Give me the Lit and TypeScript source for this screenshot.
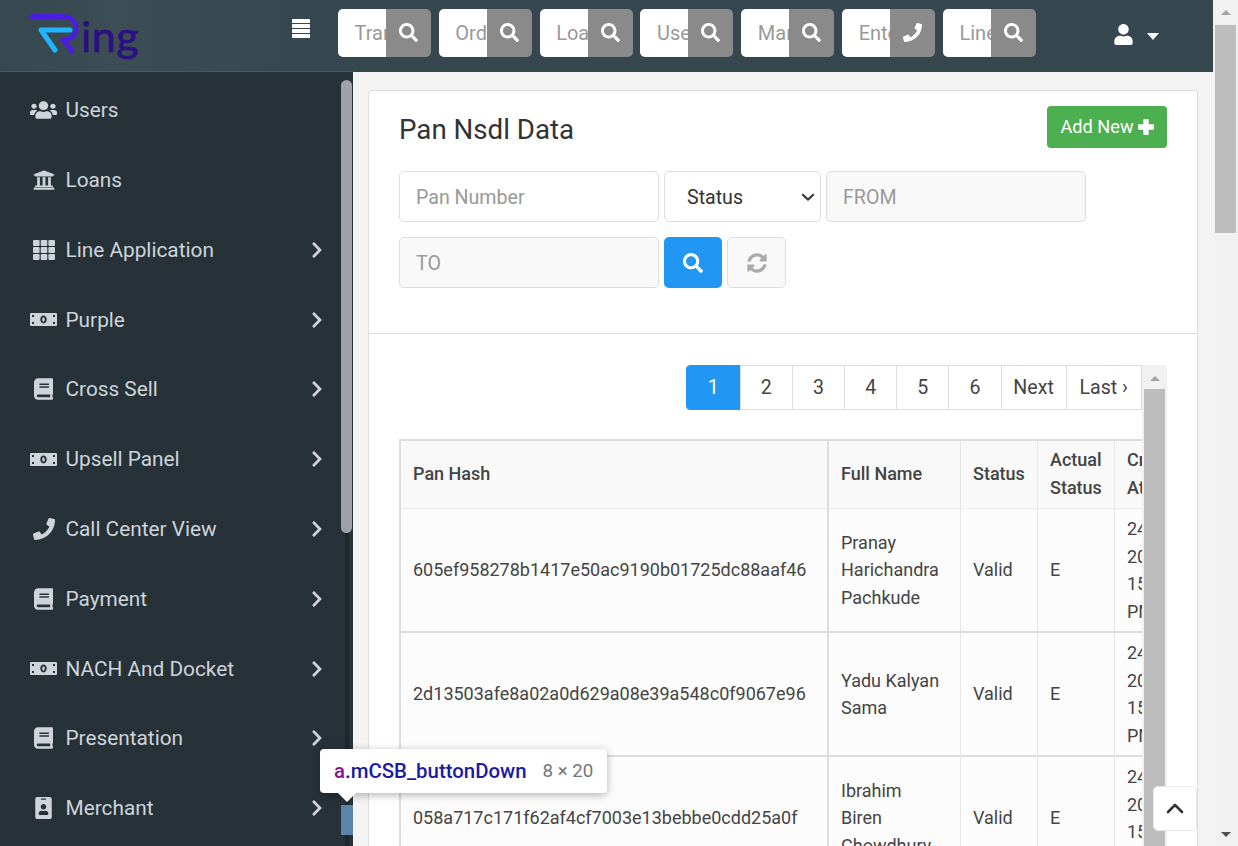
import { LitElement, html, css, svg } from "lit";
import { customElement } from "lit/decorators.js";

const P = {
  search: "M505 442.7L405.3 343c-4.5-4.5-10.6-7-17-7H372c27.6-35.3 44-79.7 44-128C416 93.1 322.9 0 208 0S0 93.1 0 208s93.1 208 208 208c48.3 0 92.7-16.4 128-44v16.3c0 6.4 2.5 12.5 7 17l99.7 99.7c9.4 9.4 24.6 9.4 33.9 0l28.3-28.3c9.4-9.4 9.4-24.6.1-34zM208 336c-70.7 0-128-57.2-128-128 0-70.7 57.2-128 128-128 70.7 0 128 57.2 128 128 0 70.7-57.2 128-128 128z",
  phone: "M493.4 24.6l-104-24c-11.3-2.6-22.9 3.3-27.5 13.9l-48 112c-4.2 9.8-1.4 21.3 6.9 28l60.6 49.6c-36 76.7-98.9 140.5-177.2 177.2l-49.6-60.6c-6.8-8.3-18.2-11.1-28-6.9l-112 48C3.9 366.5-2 378.1.6 389.4l24 104C27.1 504.2 36.7 512 48 512c256.1 0 464-207.5 464-464 0-11.2-7.7-20.9-18.6-23.4z",
  user: "M224 256c70.7 0 128-57.3 128-128S294.7 0 224 0 96 57.3 96 128s57.3 128 128 128zm89.6 32h-16.7c-22.2 10.2-46.9 16-72.9 16s-50.6-5.8-72.9-16h-16.7C60.2 288 0 348.2 0 422.4V464c0 26.5 21.5 48 48 48h352c26.5 0 48-21.5 48-48v-41.6c0-74.2-60.2-134.4-134.4-134.4z",
  users: "M96 224c35.3 0 64-28.7 64-64s-28.7-64-64-64-64 28.7-64 64 28.7 64 64 64zm448 0c35.3 0 64-28.7 64-64s-28.7-64-64-64-64 28.7-64 64 28.7 64 64 64zm32 32h-64c-17.6 0-33.5 7.1-45.1 18.6 40.3 22.1 68.9 62 75.1 109.4h66c17.7 0 32-14.3 32-32v-32c0-35.3-28.7-64-64-64zm-256 0c61.9 0 112-50.1 112-112S381.9 32 320 32 208 82.1 208 144s50.1 112 112 112zm76.8 32h-8.3c-20.8 10-43.9 16-68.5 16s-47.6-6-68.5-16h-8.3C179.6 288 128 339.6 128 403.2V432c0 26.5 21.5 48 48 48h288c26.5 0 48-21.5 48-48v-28.8c0-63.6-51.6-115.2-115.2-115.2zm-223.7-13.4C161.5 263.1 145.6 256 128 256H64c-35.3 0-64 28.7-64 64v32c0 17.7 14.3 32 32 32h65.9c6.3-47.4 34.9-87.3 75.2-109.4z",
  bank: "M496 128v16a8 8 0 0 1-8 8h-24v12c0 6.627-5.373 12-12 12H60c-6.627 0-12-5.373-12-12v-12H24a8 8 0 0 1-8-8v-16a8 8 0 0 1 4.941-7.392l232-88a7.996 7.996 0 0 1 6.118 0l232 88A8 8 0 0 1 496 128zm-24 304H40c-13.255 0-24 10.745-24 24v16a8 8 0 0 0 8 8h464a8 8 0 0 0 8-8v-16c0-13.255-10.745-24-24-24zM96 192v192H60c-6.627 0-12 5.373-12 12v20h416v-20c0-6.627-5.373-12-12-12h-36V192h-64v192h-64V192h-64v192h-64V192H96z",
  book: "M448 360V24c0-13.3-10.7-24-24-24H96C43 0 0 43 0 96v320c0 53 43 96 96 96h328c13.3 0 24-10.7 24-24v-16c0-7.5-3.5-14.3-8.9-18.7-4.2-15.4-4.2-59.3 0-74.7 5.4-4.3 8.9-11.1 8.9-18.6zM128 134c0-3.3 2.7-6 6-6h212c3.3 0 6 2.7 6 6v20c0 3.3-2.7 6-6 6H134c-3.3 0-6-2.7-6-6v-20zm0 64c0-3.3 2.7-6 6-6h212c3.3 0 6 2.7 6 6v20c0 3.3-2.7 6-6 6H134c-3.3 0-6-2.7-6-6v-20zm253.4 250H96c-17.7 0-32-14.3-32-32 0-17.6 14.4-32 32-32h285.4c-1.9 17.1-1.9 46.9 0 64z",
  badge: "M336 0H48C21.5 0 0 21.5 0 48v416c0 26.5 21.5 48 48 48h288c26.5 0 48-21.5 48-48V48c0-26.5-21.5-48-48-48zM144 32h96c8.8 0 16 7.2 16 16s-7.2 16-16 16h-96c-8.8 0-16-7.2-16-16s7.2-16 16-16zm48 128c35.3 0 64 28.7 64 64s-28.7 64-64 64-64-28.7-64-64 28.7-64 64-64zm112 236.8c0 10.6-10 19.2-22.4 19.2H102.4C90 416 80 407.4 80 396.8v-19.2c0-31.8 30.1-57.6 67.2-57.6h5c12.3 5.1 25.7 8 39.8 8s27.6-2.9 39.8-8h5c37.1 0 67.2 25.8 67.2 57.6v19.2z",
  sync: "M370.72 133.28C339.458 104.008 298.888 87.962 255.848 88c-77.458.068-144.328 53.178-162.791 126.85-1.344 5.363-6.122 9.15-11.651 9.15H24.103c-7.498 0-13.194-6.807-11.807-14.176C33.933 94.924 134.813 8 256 8c66.448 0 126.791 26.136 171.315 68.685L463.03 40.97C478.149 25.851 504 36.559 504 57.941V192c0 13.255-10.745 24-24 24H345.941c-21.382 0-32.09-25.851-16.971-40.971l41.75-41.749zM32 296h134.059c21.382 0 32.09 25.851 16.971 40.971l-41.75 41.75c31.262 29.273 71.835 45.319 114.876 45.28 77.418-.07 144.315-53.144 162.787-126.849 1.344-5.363 6.122-9.15 11.651-9.15h57.304c7.498 0 13.194 6.807 11.807 14.176C478.067 417.076 377.187 504 256 504c-66.448 0-126.791-26.136-171.315-68.685L48.97 471.03C33.851 486.149 8 475.441 8 454.059V320c0-13.255 10.745-24 24-24z",
  chevron: "M285.476 272.971L91.132 467.314c-9.373 9.373-24.569 9.373-33.941 0l-22.667-22.667c-9.357-9.357-9.375-24.522-.04-33.901L188.505 256 34.484 101.255c-9.335-9.379-9.317-24.544.04-33.901l22.667-22.667c9.373-9.373 24.569-9.373 33.941 0L285.475 239.03c9.373 9.372 9.373 24.568.001 33.941z",
};

const icon = (d: string, w: number, h: number, vb = "0 0 512 512") =>
  html`<svg width=${w} height=${h} viewBox=${vb} fill="currentColor"><path d=${d}></path></svg>`;

// the reference draws this one flatter than the font's own proportions
const usersIcon = html`<svg width="27" height="20" viewBox="0 0 640 512" preserveAspectRatio="none" fill="currentColor"><path d=${P.users}></path></svg>`;

const grid = html`<svg width="22" height="20" viewBox="0 0 22 20" fill="currentColor">
  ${[0, 7.7, 15.4].map((x) => [0, 7, 14].map((y) => svg`<rect x=${x} y=${y} width="6.6" height="6" rx="1"></rect>`))}
</svg>`;

// money note, the corners and the middle are cut out of the plate
const bill = html`<svg width="27" height="13" viewBox="0 0 27 13">
  <rect width="27" height="13" rx="1" fill="currentColor"></rect>
  <g fill="#263238">
    <rect x="2" y="2" width="2" height="2"></rect>
    <rect x="23" y="2" width="2" height="2"></rect>
    <rect x="2" y="9" width="2" height="2"></rect>
    <rect x="23" y="9" width="2" height="2"></rect>
    <path fill-rule="evenodd" d="M13.5 2.6c2 0 3.2 1.7 3.2 3.9s-1.2 3.9-3.2 3.9-3.2-1.7-3.2-3.9 1.2-3.9 3.2-3.9zm0 1.7c-.8 0-1.2 1-1.2 2.2s.4 2.2 1.2 2.2 1.2-1 1.2-2.2-.4-2.2-1.2-2.2z"></path>
  </g>
</svg>`;

const menu = [
  { label: "Users", icon: usersIcon, sub: false },
  { label: "Loans", icon: icon(P.bank, 22, 22), sub: false },
  { label: "Line Application", icon: grid, sub: true },
  { label: "Purple", icon: bill, sub: true },
  { label: "Cross Sell", icon: icon(P.book, 19, 22, "0 0 448 512"), sub: true },
  { label: "Upsell Panel", icon: bill, sub: true },
  { label: "Call Center View", icon: icon(P.phone, 22, 22), sub: true },
  { label: "Payment", icon: icon(P.book, 19, 22, "0 0 448 512"), sub: true },
  { label: "NACH And Docket", icon: bill, sub: true },
  { label: "Presentation", icon: icon(P.book, 19, 22, "0 0 448 512"), sub: true },
  { label: "Merchant", icon: icon(P.badge, 17, 22, "0 0 384 512"), sub: true },
];

const lookups = [
  { hint: "Transaction Id", phone: false },
  { hint: "Order Id", phone: false },
  { hint: "Loan Id", phone: false },
  { hint: "User Id", phone: false },
  { hint: "Mandate Id", phone: false },
  { hint: "Enter Number", phone: true },
  { hint: "Line Id", phone: false },
];

const rows = [
  { hash: "605ef958278b1417e50ac9190b01725dc88aaf46", name: ["Pranay", "Harichandra", "Pachkude"] },
  { hash: "2d13503afe8a02a0d629a08e39a548c0f9067e96", name: ["Yadu Kalyan", "Sama"] },
  { hash: "058a717c171f62af4cf7003e13bebbe0cdd25a0f", name: ["Ibrahim", "Biren", "Chowdhury"] },
];

@customElement("app-root")
export class AppRoot extends LitElement {
  static styles = css`
    :host {
      display: block;
      height: 846px;
      overflow: hidden;
      position: relative;
      font-family: Roboto, "Noto Sans", sans-serif;
      color: #444;
    }
    * {
      box-sizing: border-box;
    }
    .page {
      display: flex;
      height: 846px;
    }
    .main {
      width: 1213px;
      display: flex;
      flex-direction: column;
    }

    /* top bar */
    .topbar {
      height: 72px;
      flex: none;
      display: flex;
      align-items: flex-start;
      background: #37474f;
    }
    .brand {
      width: 283px;
      height: 72px;
      flex: none;
      background: linear-gradient(90deg, #37474f, #3c4d56 40%, #37474f);
    }
    .toggle {
      width: 55px;
      flex: none;
      padding: 19px 0 0 9px;
    }
    .lookups {
      display: flex;
      gap: 7.83px;
      padding-top: 9px;
    }
    .lookup {
      display: flex;
      width: 93px;
      height: 48px;
      border-radius: 5px;
      overflow: hidden;
    }
    .lookup input {
      width: 48px;
      flex: none;
      border: none;
      outline: none;
      padding: 0 0 0 16.5px;
      font: 20px Roboto, sans-serif;
      background: #fff;
    }
    .lookup input::placeholder {
      color: #999;
      opacity: 1;
    }
    .lookup span {
      flex: 1;
      display: flex;
      align-items: center;
      justify-content: center;
      background: #8a8a8a;
      color: #fff;
      padding-bottom: 2px;
    }
    .account {
      display: flex;
      align-items: center;
      gap: 13px;
      margin-left: 77px;
      padding-top: 24px;
      color: #fff;
    }
    .caret {
      width: 0;
      height: 0;
      border-left: 6px solid transparent;
      border-right: 6px solid transparent;
      border-top: 7px solid #fff;
      margin-top: 3px;
    }

    .body {
      flex: 1;
      display: flex;
      min-height: 0;
    }

    /* side menu */
    .side {
      width: 353px;
      flex: none;
      background: #263238;
      position: relative;
      overflow: hidden;
      padding-top: 3.3px;
      border-top: 1px solid #4a5a62;
      margin-top: -1px;
    }
    .side a {
      display: flex;
      align-items: center;
      height: 69.8px;
      padding-left: 30px;
      color: #ced4da;
      font-size: 20.8px;
    }
    .side .ico {
      width: 27px;
      flex: none;
      display: flex;
      justify-content: center;
    }
    .side .name {
      margin-left: 8.5px;
      flex: 1;
    }
    .side .arrow {
      width: 43px;
      flex: none;
      display: flex;
    }
    .bar-rail {
      position: absolute;
      left: 345px;
      top: 8px;
      bottom: 0;
      width: 4px;
      background: #1d272c;
    }
    .bar-thumb {
      position: absolute;
      left: 341px;
      top: 8px;
      width: 11px;
      height: 453px;
      border-radius: 6px;
      background: #9fa3a6;
    }
    .bar-down {
      position: absolute;
      left: 341px;
      top: 733px;
      width: 12px;
      height: 30px;
      background: #5a84a9;
    }

    /* content */
    .content {
      flex: 1;
      min-width: 0;
      background: #f3f3f3;
      padding: 18px 15px 0;
      overflow: hidden;
    }
    .card {
      background: #fff;
      border: 1px solid #ddd;
      border-bottom: none;
      border-radius: 4px 4px 0 0;
      height: 900px;
    }
    .card-top {
      padding: 15px 30px 45px;
      border-bottom: 1px solid #ddd;
    }
    .title-row {
      display: flex;
      justify-content: space-between;
      align-items: flex-start;
      margin-bottom: 23px;
      height: 42px;
    }
    h1 {
      margin: 0;
      font-size: 27.7px;
      font-weight: 400;
      line-height: 48px;
      color: #333;
    }
    .add {
      display: flex;
      align-items: center;
      gap: 4px;
      height: 42px;
      width: 120px;
      justify-content: center;
      border: none;
      border-radius: 4px;
      background: #4caf50;
      color: #fff;
      font: 18.2px Roboto, sans-serif;
      padding: 0 0 1px;
    }
    .filters {
      display: flex;
      flex-wrap: wrap;
      gap: 15px 5px;
    }
    .filters input {
      width: 260px;
      height: 51px;
      border: 1px solid #ddd;
      border-radius: 5px;
      padding: 2px 16px 0;
      font: 19.6px Roboto, sans-serif;
      outline: none;
      background: #fff;
    }
    .filters input.date {
      background: #f9f9f9;
    }
    .filters input::placeholder {
      color: #999;
      opacity: 1;
    }
    .filters select {
      appearance: none;
      width: 157px;
      height: 51px;
      border: 1px solid #ddd;
      border-radius: 5px;
      padding: 2px 0 0 22px;
      font: 19.6px Roboto, sans-serif;
      color: #333;
      background: #fff url("data:image/svg+xml,%3Csvg xmlns='http://www.w3.org/2000/svg' width='14' height='8'%3E%3Cpath d='M1.2 1.2 7 6.6l5.8-5.4' fill='none' stroke='%23333' stroke-width='2'/%3E%3C/svg%3E") no-repeat 136px 21px;
      outline: none;
    }
    .go,
    .reset {
      height: 51px;
      display: flex;
      align-items: center;
      justify-content: center;
      border-radius: 5px;
    }
    .go {
      width: 58px;
      border: none;
      background: #2196f3;
      color: #fff;
    }
    .reset {
      width: 59px;
      border: 1px solid #ddd;
      background: #f9f9f9;
      color: #aaa;
    }

    .card-body {
      display: flex;
      padding: 31px 30px 0;
      width: 798px;
    }
    .list {
      width: 745px;
      flex: none;
      min-width: 0;
    }
    .pager {
      display: flex;
      justify-content: flex-end;
      height: 45px;
      margin-bottom: 29px;
      padding-right: 2px;
    }
    .pager a {
      display: flex;
      align-items: center;
      padding: 0 20.1px;
      border: 1px solid #ddd;
      margin-left: -1px;
      font-size: 19.6px;
      color: #444;
      background: #fff;
    }
    .pager a.on {
      padding: 0 20.8px;
      background: #2196f3;
      border-color: #2196f3;
      color: #fff;
      border-radius: 4px 0 0 4px;
    }
    .pager a.word {
      padding: 0 11.7px;
    }
    .pager a.last {
      padding: 0 13px;
    }
    .table-wrap {
      overflow: hidden;
    }
    table {
      table-layout: fixed;
      width: 814px;
      border-collapse: separate;
      border-spacing: 0;
      font-size: 18px;
      line-height: 27.5px;
      border-top: 2px solid #ddd;
      border-left: 2px solid #ddd;
    }
    th,
    td {
      padding: 6px 12px;
      text-align: left;
      vertical-align: middle;
      border-right: 1px solid #e6e6e6;
    }
    th {
      padding: 5px 12px 7px;
      font-weight: 500;
      background: #f9f9f9;
      border-bottom: 1px solid #eee;
    }
    td {
      background: #fcfcfc;
      border-bottom: 2px solid #ddd;
      font-weight: 400;
    }
    th:first-child,
    td:first-child {
      border-right: 2px solid #ddd;
    }
    .inner-bar {
      width: 25px;
      flex: none;
      margin-left: -2px;
      background: #f1f1f1;
      padding: 11px 2px 0;
      height: 600px;
    }
    .up-tri {
      width: 0;
      height: 0;
      margin: 0 auto;
      border-left: 5.5px solid transparent;
      border-right: 5.5px solid transparent;
      border-bottom: 5.5px solid #a3a3a3;
    }
    .inner-bar .thumb {
      height: 500px;
      margin-top: 8px;
      background: #bdbdbd;
    }

    /* browser scrollbar of the page */
    .page-bar {
      width: 25px;
      flex: none;
      display: flex;
      flex-direction: column;
      align-items: center;
      background: #f1f1f1;
      padding-top: 10px;
    }
    .page-bar .thumb {
      width: 21px;
      height: 208px;
      margin-top: 9.5px;
      background: #bdbdbd;
    }
    .down-tri {
      width: 0;
      height: 0;
      margin-top: auto;
      margin-bottom: 9px;
      border-left: 5.5px solid transparent;
      border-right: 5.5px solid transparent;
      border-top: 5.5px solid #505050;
    }

    .back-top {
      position: absolute;
      left: 1153px;
      top: 786px;
      width: 44px;
      height: 45px;
      display: flex;
      align-items: center;
      justify-content: center;
      background: #fff;
      border: 1px solid #e8e8e8;
      border-radius: 5px;
    }

    /* devtools hover label */
    .tip {
      position: absolute;
      left: 320px;
      top: 749px;
      width: 287px;
      height: 44px;
      display: flex;
      align-items: center;
      gap: 16px;
      padding-left: 14px;
      background: #fff;
      border-radius: 4px;
      box-shadow: 0 2px 8px rgba(0, 0, 0, 0.3);
      white-space: nowrap;
    }
    .tip::after {
      content: "";
      position: absolute;
      left: 18px;
      top: 44px;
      border-left: 9px solid transparent;
      border-right: 9px solid transparent;
      border-top: 9px solid #fff;
    }
    .tip b {
      font-size: 20.4px;
      font-weight: 500;
      color: #1a1aa6;
    }
    .tip i {
      font-style: normal;
      color: #881391;
    }
    .tip span {
      font-size: 18.7px;
      color: #777;
    }
  `;

  private logo() {
    return html`<svg width="160" height="72" viewBox="0 0 160 72">
      <path d="M32 16.500H62c9 0 14 5 14 12s-5 10.500-13 11.500l9 11" fill="none" stroke="#4a1de0" stroke-width="5" stroke-linecap="round" stroke-linejoin="round"></path>
      <path d="M70 30H41l14 20" fill="none" stroke="#1fb6ff" stroke-width="5" stroke-linecap="round" stroke-linejoin="round"></path>
      <text x="81" y="52" font-family="Lato, Roboto, sans-serif" font-size="43" fill="#2b1080" stroke="#2b1080" stroke-width="0.7" letter-spacing="0.5">ing</text>
    </svg>`;
  }

  render() {
    return html`
      <div class="page">
        <div class="main">
          <header class="topbar">
            <div class="brand">${this.logo()}</div>
            <div class="toggle">
              <svg width="18" height="19" viewBox="0 0 18 19" fill="#fff" style="display:block">
                <rect width="18" height="4" y="0" rx="0.6"></rect>
                <rect width="18" height="4" y="5" rx="0.6"></rect>
                <rect width="18" height="4" y="10" rx="0.6"></rect>
                <rect width="18" height="4" y="15" rx="0.6"></rect>
              </svg>
            </div>
            <div class="lookups">
              ${lookups.map(
                (l) => html`<div class="lookup">
                  <input placeholder=${l.hint} />
                  <span>${l.phone ? icon(P.phone, 19, 19) : icon(P.search, 19, 19)}</span>
                </div>`
              )}
            </div>
            <div class="account">
              ${icon(P.user, 21, 21, "0 0 448 512")}
              <div class="caret"></div>
            </div>
          </header>
          <div class="body">
            <nav class="side">
              ${menu.map(
                (m) => html`<a>
                  <span class="ico">${m.icon}</span>
                  <span class="name">${m.label}</span>
                  ${m.sub
                    ? html`<span class="arrow">${icon(P.chevron, 14, 18, "0 0 320 512")}</span>`
                    : ""}
                </a>`
              )}
              <div class="bar-rail"></div>
              <div class="bar-thumb"></div>
              <div class="bar-down"></div>
            </nav>
            <main class="content">
              <section class="card">
                <div class="card-top">
                  <div class="title-row">
                    <h1>Pan Nsdl Data</h1>
                    <button class="add">
                      Add New
                      <svg width="16" height="16" viewBox="0 0 16 16" fill="#fff">
                        <path d="M5.300 1a1 1 0 0 1 1-1h3.400a1 1 0 0 1 1 1v4.300H15a1 1 0 0 1 1 1v3.400a1 1 0 0 1-1 1h-4.300V15a1 1 0 0 1-1 1H6.300a1 1 0 0 1-1-1v-4.300H1a1 1 0 0 1-1-1V6.300a1 1 0 0 1 1-1h4.300z"></path>
                      </svg>
                    </button>
                  </div>
                  <div class="filters">
                    <input placeholder="Pan Number" />
                    <select><option>Status</option></select>
                    <input class="date" placeholder="FROM" />
                    <input class="date" placeholder="TO" />
                    <div class="go">${icon(P.search, 20, 20)}</div>
                    <div class="reset">${icon(P.sync, 20, 20)}</div>
                  </div>
                </div>
                <div class="card-body">
                  <div class="list">
                    <div class="pager">
                      <a class="on">1</a><a>2</a><a>3</a><a>4</a><a>5</a><a>6</a>
                      <a class="word">Next</a><a class="word last">Last ›</a>
                    </div>
                    <div class="table-wrap">
                      <table>
                        <colgroup>
                          <col style="width:428px" /><col style="width:132px" /><col style="width:77px" /><col style="width:77px" /><col style="width:100px" />
                        </colgroup>
                        <thead>
                          <tr>
                            <th>Pan Hash</th>
                            <th>Full Name</th>
                            <th>Status</th>
                            <th>Actual Status</th>
                            <th>Created At</th>
                          </tr>
                        </thead>
                        <tbody>
                          ${rows.map(
                            (r) => html`<tr>
                              <td>${r.hash}</td>
                              <td>${r.name.map((part) => html`${part}<br />`)}</td>
                              <td>Valid</td>
                              <td>E</td>
                              <td>24 Jun<br />2022<br />15:20<br />PM</td>
                            </tr>`
                          )}
                        </tbody>
                      </table>
                    </div>
                  </div>
                  <div class="inner-bar">
                    <div class="up-tri"></div>
                    <div class="thumb"></div>
                  </div>
                </div>
              </section>
            </main>
          </div>
        </div>
        <div class="page-bar">
          <div class="up-tri"></div>
          <div class="thumb"></div>
          <div class="down-tri"></div>
        </div>
      </div>
      <div class="back-top">
        <svg width="18" height="11" viewBox="0 0 18 11" fill="none" stroke="#333" stroke-width="2.6" stroke-linecap="round" stroke-linejoin="round">
          <path d="M2 9l7-7 7 7"></path>
        </svg>
      </div>
      <div class="tip"><b><i>a</i>.mCSB_buttonDown</b><span>8 × 20</span></div>
    `;
  }
}
